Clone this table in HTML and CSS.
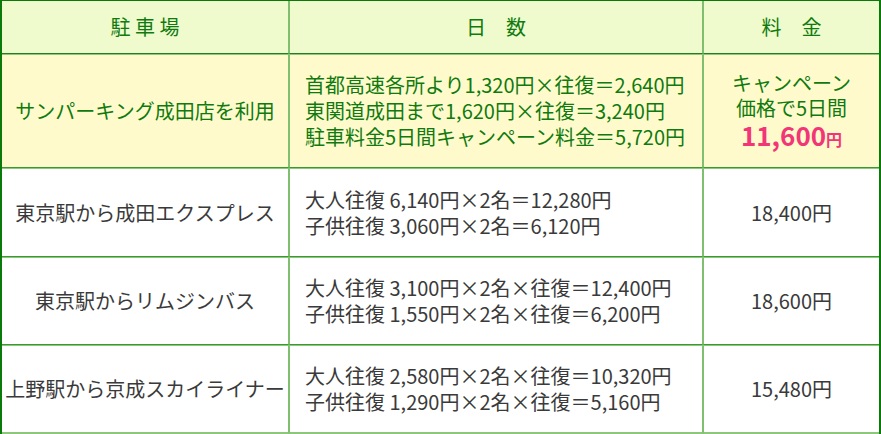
FILE: index.html
```html
<!DOCTYPE html>
<html lang="ja">
<head>
<meta charset="utf-8">
<title>料金比較</title>
<link rel="stylesheet" href="styles.css">
</head>
<body>
<div class="fare">
  <div class="cell head c1">駐 車 場</div>
  <div class="cell head c2 center">日　数</div>
  <div class="cell head c3">料　金</div>

  <div class="cell hl c1 green tall">サンパーキング成田店を利用</div>
  <div class="cell hl c2 green tall">首都高速各所より1,320円×往復＝2,640円<br>東関道成田まで1,620円×往復＝3,240円<br>駐車料金5日間キャンペーン料金＝5,720円</div>
  <div class="cell hl c3 green tall"><div class="campaign">キャンペーン<br>価格で5日間<br><span class="price">11,600<span class="yen">円</span></span></div></div>

  <div class="cell c1 r2">東京駅から成田エクスプレス</div>
  <div class="cell c2 r2">大人往復 6,140円×2名＝12,280円<br>子供往復 3,060円×2名＝6,120円</div>
  <div class="cell c3 r2">18,400円</div>

  <div class="cell c1 r3">東京駅からリムジンバス</div>
  <div class="cell c2 r3">大人往復 3,100円×2名×往復＝12,400円<br>子供往復 1,550円×2名×往復＝6,200円</div>
  <div class="cell c3 r3">18,600円</div>

  <div class="cell c1 r3 last">上野駅から京成スカイライナー</div>
  <div class="cell c2 r3 last">大人往復 2,580円×2名×往復＝10,320円<br>子供往復 1,290円×2名×往復＝5,160円</div>
  <div class="cell c3 r3 last">15,480円</div>
</div>
</body>
</html>
```

FILE: styles.css
```css
html, body {
  margin: 0;
  padding: 0;
  background: #ffffff;
}

body {
  font-family: "Noto Sans CJK JP", "Noto Sans", sans-serif;
  font-size: 20px;
  line-height: 26px;
  color: #3a3a3a;
}

.fare {
  width: 881px;
  box-sizing: border-box;
  display: grid;
  grid-template-columns: 287px 414px 1fr;
  border-top: 1px solid #0a7a0a;
  border-left: 2px solid #0a7a0a;
  border-right: 2px solid #0a7a0a;
}

.cell {
  display: flex;
  align-items: center;
  justify-content: center;
  text-align: center;
  border-top: 1px solid #8cc77c;
  border-bottom: 1px solid #3a9a32;
  white-space: nowrap;
}

.c1 {
  border-right: 1px solid #80bf70;
}

.c2 {
  border-left: 1px solid #80bf70;
  border-right: 1px solid #80bf70;
  justify-content: flex-start;
  text-align: left;
  padding-left: 15px;
}

.c2.center {
  justify-content: center;
  padding-left: 0;
}

.c3 {
  border-left: 1px solid #80bf70;
}

.head {
  background: #effbcc;
  color: #0f7a0f;
  border-top: none;
  border-bottom-color: #267f1f;
  height: 52px;
}

.hl {
  background: #fffacc;
}

.green {
  color: #0f7a0f;
}

.tall {
  height: 112px;
}

.r2 {
  height: 87px;
}

.r3 {
  height: 86px;
}

.last {
  border-bottom: 2px solid #8cc77c;
}

.campaign {
  text-align: center;
  line-height: 25px;
  padding-top: 2px;
}

.price {
  display: inline-block;
  color: #f23577;
  font-weight: bold;
  font-size: 26px;
  line-height: 30px;
}

.yen {
  font-size: 16px;
  font-weight: bold;
}
```
